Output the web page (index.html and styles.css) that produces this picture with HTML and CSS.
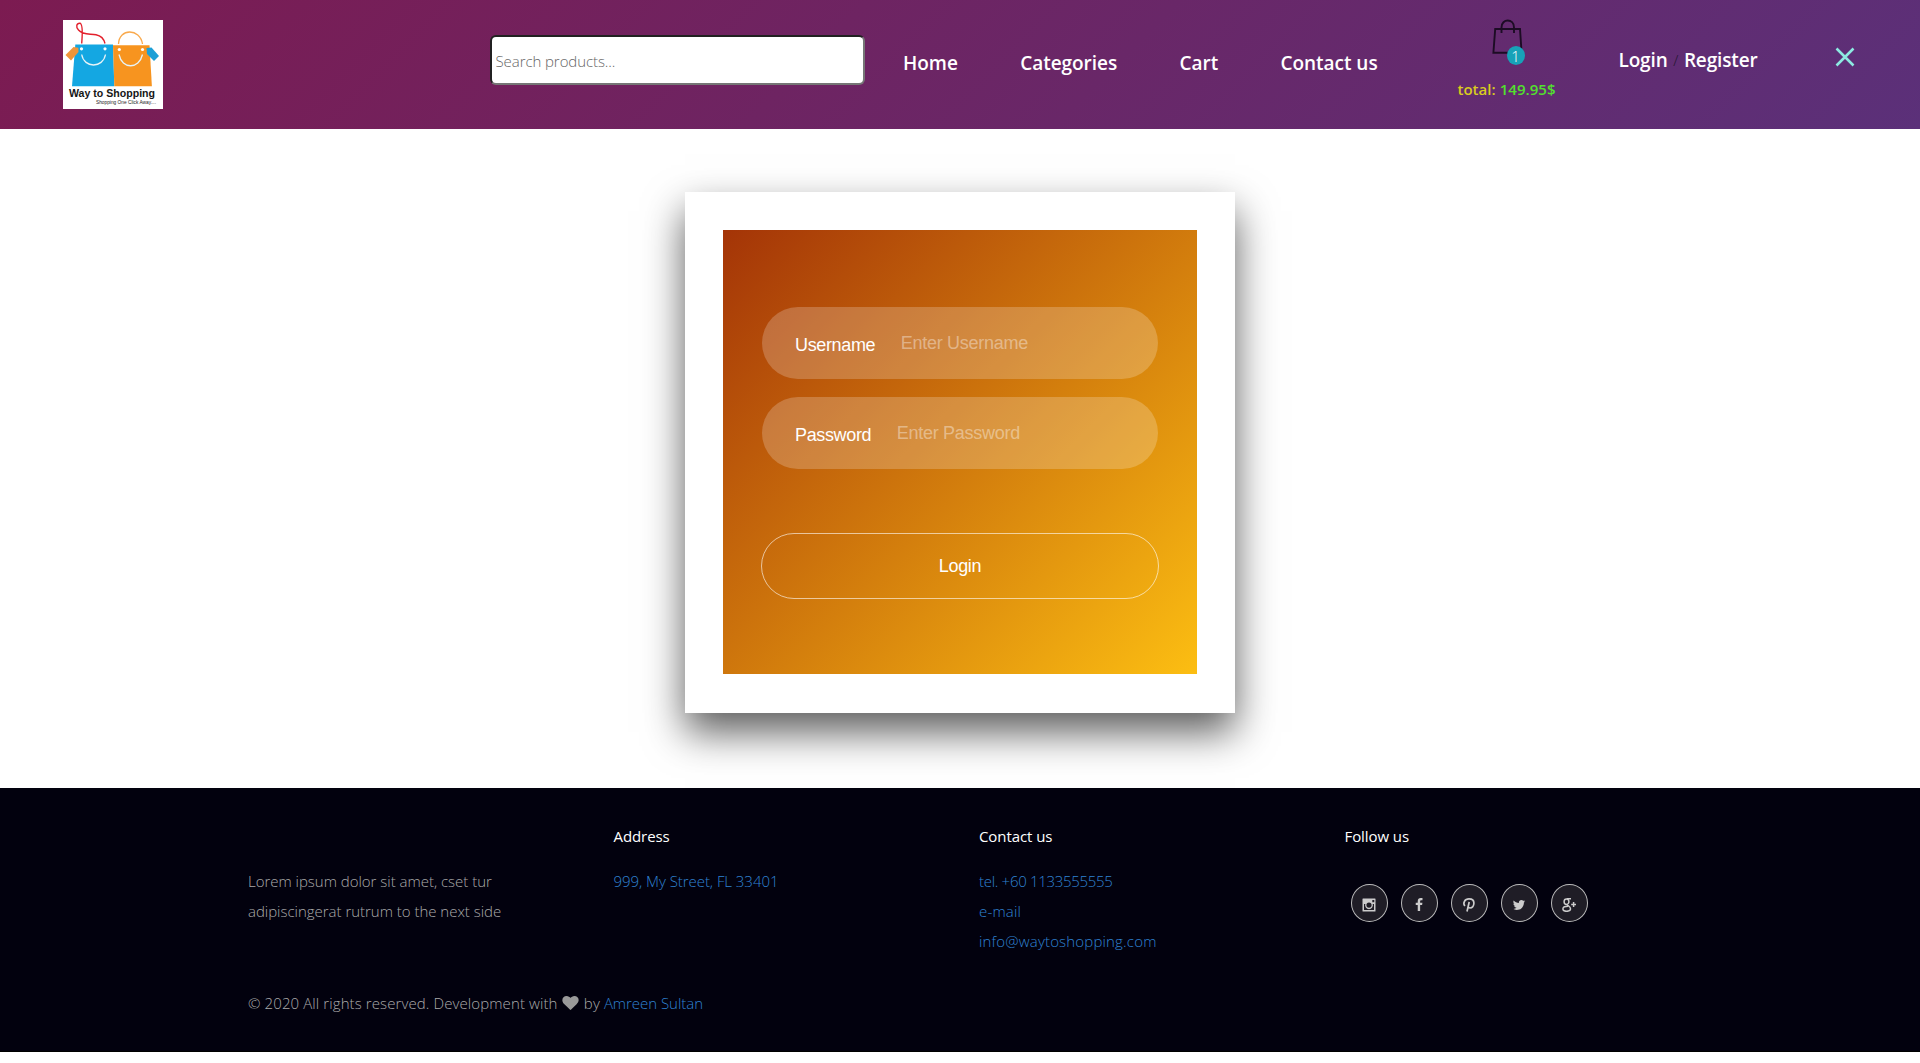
FILE: index.html
```html
<!DOCTYPE html>
<html lang="en">
<head>
<meta charset="utf-8">
<title>Way to Shopping - Login</title>
<link rel="stylesheet" href="styles.css">
</head>
<body>
<header class="site-header">
  <a class="logo" href="#">
    <svg viewBox="0 0 100 89" width="100" height="89">
      <rect width="100" height="89" fill="#fff"/>
      <path d="M12.3 24.5H50l1.3 41.8H9z" fill="#14a7e2"/>
      <path d="M50 25.2h36.5l2.4 41.1H51.3z" fill="#f7941f"/>
      <path d="M18.7 23.5C19.2 16 20.5 4.500 17 3.200C13.500 3 12.500 7 15.500 10C20 15.500 27 13.500 33 14.700C38.500 15.800 41 19 42 23.500" fill="none" stroke="#e3202c" stroke-width="1.400"/>
      <path d="M55.500 24C56 8 77 8 79.500 24" fill="none" stroke="#f9a94c" stroke-width="1.300"/>
      <path d="M18.700 34.500C21 48.500 40 48.500 42.500 34.500M56 34.500C59 49.500 76 49.500 79.500 34.500" fill="none" stroke="#e6f3f7" stroke-width="1.300"/>
      <circle cx="18.500" cy="28.800" r="1.600" fill="#fff"/><circle cx="42" cy="28.800" r="1.600" fill="#fff"/>
      <circle cx="56.300" cy="29.500" r="1.600" fill="#fff"/><circle cx="79.500" cy="29.500" r="1.600" fill="#fff"/>
      <path d="M10.500 27l4.800.800.200 4.200-7.500 8.500L2.500 35z" fill="#f0953a"/>
      <path d="M83.500 28l5-.500 7.500 8.500-5 5-7-7z" fill="#1c9fd6"/>
      <text x="6" y="77" class="logo-name" textLength="86" lengthAdjust="spacingAndGlyphs">Way to Shopping</text>
      <text x="33" y="84.300" class="logo-tag" textLength="60" lengthAdjust="spacingAndGlyphs">Shopping One Click Away....</text>
    </svg>
  </a>
  <input class="search" type="text" placeholder="Search products...">
  <nav class="main-nav">
    <a href="#">Home</a><a href="#">Categories</a><a href="#">Cart</a><a href="#">Contact us</a>
  </nav>
  <div class="cart">
    <div class="cart-icon">
      <svg viewBox="0 0 34 38" width="34" height="38" fill="none" stroke="#1c0c24" stroke-width="1.900">
        <path d="M3.200 10h24.800l1.600 23.800H1.400z"/>
        <path d="M9.500 14V8.500C9.500-.8 22 -.8 22 8.500V14"/>
      </svg>
      <span class="badge">1</span>
    </div>
    <div class="total">total: <span class="amount">149.95$</span></div>
  </div>
  <div class="account"><a href="#">Login</a><span class="slash">/</span><a href="#">Register</a></div>
  <button class="close" aria-label="Close">
    <svg viewBox="0 0 20 20" width="20" height="20" stroke="#8deae2" stroke-width="2.500"><path d="M1.500 1.500l17 17M18.500 1.500l-17 17"/></svg>
  </button>
</header>

<main class="content">
  <div class="card">
    <form class="login">
      <label class="field"><span>Username</span><input type="text" placeholder="Enter Username"></label>
      <label class="field"><span>Password</span><input type="password" placeholder="Enter Password"></label>
      <button class="submit" type="button">Login</button>
    </form>
  </div>
</main>

<footer class="site-footer">
  <div class="columns">
    <div class="column about"><p>Lorem ipsum dolor sit amet, cset tur<br>adipiscingerat rutrum to the next side</p></div>
    <div class="column"><h4>Address</h4><a href="#">999, My Street, FL 33401</a></div>
    <div class="column">
      <h4>Contact us</h4>
      <a class="phone" href="#">tel. +60 1133555555</a>
      <a class="mail" href="#">e-mail</a>
      <a class="mail" href="#">info@waytoshopping.com</a>
    </div>
    <div class="column">
      <h4>Follow us</h4>
      <div class="social">
        <a href="#" aria-label="Instagram"><svg viewBox="0 0 14 14"><path fill-rule="evenodd" d="M1 .5h12q.5 0 .5.500v12q0 .5-.5.500H1q-.5 0-.5-.5V1Q.5.500 1 .500zM10.300 2v2.200h2V2zM2 6v6h10V6h-1.300a3.900 3.900 0 1 1-7.400 0zM7 4.500a2.600 2.600 0 1 0 0 5.200 2.600 2.600 0 0 0 0-5.200z"/></svg></a>
        <a href="#" aria-label="Facebook"><svg viewBox="0 0 1792 1792"><path d="M1343 12v264h-157q-86 0-116 36t-30 108v189h293l-39 296h-254v759h-306v-759h-255v-296h255v-218q0-186 104-288.500t277-102.500q147 0 228 12z"/></svg></a>
        <a href="#" aria-label="Pinterest"><svg viewBox="0 0 14 14"><path d="M2.900 8C.5 5 2.700.9 7 .9c3.200 0 4.900 1.900 4.900 4.200 0 2.800-1.700 4.900-3.900 4.900-1.100 0-1.900-.6-2.200-1.300M7.200 4L5 13.500" fill="none" stroke="#ccc" stroke-width="1.700"/></svg></a>
        <a href="#" aria-label="Twitter"><svg viewBox="0 0 1792 1792"><path d="M1684 408q-67 98-162 167 1 14 1 42 0 130-38 259.500t-115.500 248.500-184.500 210.500-258 146-323 54.500q-271 0-496-145 35 4 78 4 225 0 401-138-105-2-188-64.500t-114-159.500q33 5 61 5 43 0 85-11-112-23-185.500-111.500t-73.500-205.500v-4q68 38 146 41-66-44-105-115t-39-154q0-88 44-163 121 149 294.500 238.500t371.500 99.500q-8-38-8-74 0-134 94.500-228.500t228.500-94.500q140 0 236 102 109-21 205-78-37 115-142 178 93-10 186-50z"/></svg></a>
        <a href="#" aria-label="Google Plus"><svg viewBox="0 0 14 14"><g fill="none" stroke="#ccc" stroke-width="1.500"><ellipse cx="4.500" cy="3.700" rx="2.400" ry="2.700"/><path d="M9 .8H4.800M5.500 6.300C4.500 7.800 8.500 8 8.500 10.800 8.500 14 .9 14.200.9 11 .9 9 3.200 8.300 6 8.300M9.200 6.500H14M11.600 4.100v4.800"/></g></svg></a>
      </div>
    </div>
  </div>
  <p class="copyright">© 2020 All rights reserved. Development with <svg class="heart" viewBox="0 128 1792 1536"><path d="M896 1664q-26 0-44-18l-624-602q-10-8-27.500-26t-55.500-65.500-68-97.500-53.500-121-23.500-138q0-220 127-344t351-124q62 0 126.500 21.500t120 58 95.500 68.500 76 68q36-36 76-68t95.500-68.500 120-58 126.500-21.500q224 0 351 124t127 344q0 221-229 450l-623 600q-18 18-44 18z"/></svg> by <a href="#">Amreen Sultan</a></p>
</footer>
</body>
</html>
```
FILE: styles.css
```css
* { box-sizing: border-box; }

body {
  margin: 0;
  background: #fff;
  color: #aaa;
  font: 300 15px/30px "Open Sans", "Noto Sans", sans-serif;
}

a { color: inherit; text-decoration: none; }
p, h4 { margin: 0; }

/* Header */
.site-header {
  display: flex;
  align-items: flex-start;
  height: 129px;
  padding-left: 63px;
  background: linear-gradient(135deg, #7c1b51, #5b3079);
}

.logo { margin-top: 20px; }
.logo svg { display: block; }
.logo-name { font: bold 11.5px "Liberation Sans", Arial, sans-serif; fill: #161616; }
.logo-tag { font: 5px "Liberation Sans", Arial, sans-serif; fill: #222; }

.search {
  width: 375px;
  height: 50px;
  margin: 35px 0 0 327px;
  padding: 1px 3.5px 0;
  border: 2px inset #767676;
  border-radius: 6px;
  background: #fff;
  font: inherit;
  letter-spacing: -.08px;
}
.search::placeholder { color: #666; opacity: 1; }

.main-nav {
  display: flex;
  gap: 62.3px;
  width: 475px;
  margin: 47.5px 0 0 38px;
  color: #fff;
  font-size: 19px;
  font-weight: 600;
  white-space: nowrap;
}

.main-nav a { letter-spacing: -.03px; }

.cart {
  display: flex;
  flex-direction: column;
  align-items: center;
  width: 100px;
  margin: 19px 0 0 78.5px;
}

.cart-icon { position: relative; height: 55px; width: 30px; }
.cart-icon svg { display: block; }

.badge {
  position: absolute;
  left: 15px;
  top: 27px;
  width: 18px;
  height: 19px;
  border-radius: 50%;
  background: #17a2b8;
  color: #fff;
  font-size: 15px;
  line-height: 20px;
  text-align: center;
}

.total { color: #d9cc1e; font-weight: 600; letter-spacing: .05px; white-space: nowrap; }
.amount { color: #52e02d; }

.account {
  display: flex;
  width: 139px;
  margin: 44.5px 0 0 62px;
  color: #fff;
  font-size: 19px;
  font-weight: 600;
  letter-spacing: -.15px;
}

.slash { width: 16.5px; color: #21152f; font-size: 15px; font-weight: 300; text-align: center; }

.close {
  margin: 46.5px 0 0 77px;
  padding: 0;
  border: 0;
  background: none;
  line-height: 0;
}

/* Login card */
.content { display: flex; justify-content: center; padding: 63px 0 75px; }

.card {
  width: 550px;
  height: 521px;
  padding: 38px;
  background: #fff;
  box-shadow: 0 19px 38px rgba(0, 0, 0, .64);
}

.login {
  display: flex;
  flex-direction: column;
  height: 444px;
  padding: 77px 38px 75px;
  background: linear-gradient(135deg, #a43407, #fcbe12);
  font: 18px/30px "Liberation Sans", Arial, sans-serif;
  letter-spacing: -.35px;
}

.field {
  display: flex;
  align-items: center;
  height: 72px;
  margin: 0 1px 18px;
  padding: 0 33px;
  border-radius: 36px;
  background: rgba(255, 255, 255, .21);
  color: #fff;
}

.field span { margin: 3px 25.5px 0 0; }

.field input {
  flex: 1;
  min-width: 0;
  padding: 0;
  border: 0;
  background: none;
  color: #fff;
  font: inherit;
  letter-spacing: -.28px;
}
.field input::placeholder { color: rgba(255, 255, 255, .4); opacity: 1; }

.submit {
  height: 66px;
  margin-top: auto;
  border: 1px solid rgba(255, 255, 255, .6);
  border-radius: 33px;
  background: none;
  color: #fff;
  font: inherit;
  letter-spacing: inherit;
}

/* Footer */
.site-footer {
  height: 264px;
  padding: 33px 210px 0 248px;
  border-bottom: 1px solid #000;
  background: #02010e;
}

.columns { display: grid; grid-template-columns: repeat(4, 365.5px); height: 135px; }
.column a { display: block; width: max-content; color: #2f82d2; letter-spacing: -.05px; }
.column .phone { letter-spacing: -.3px; }
.column .mail { letter-spacing: .18px; }
.about { padding-top: 45px; }
.about p { letter-spacing: -.02px; }

h4 { margin-bottom: 15px; color: #fff; font-size: 15px; font-weight: 400; letter-spacing: -.08px; }

.social { display: flex; gap: 13px; padding: 18px 0 0 6.5px; }

.column .social a {
  display: flex;
  align-items: center;
  justify-content: center;
  width: 37px;
  height: 38px;
  padding: 4px 1px 0 0;
  border: 1px solid #bbb;
  border-radius: 50%;
  background: #1f1d26;
}

.social svg { width: 14px; height: 14px; fill: #ccc; }

.copyright { margin-top: 32px; letter-spacing: .1px; }
.copyright a { color: #2f82d2; letter-spacing: -.04px; }
.heart { width: 17px; height: 14px; margin: 0 .7px; fill: #999; vertical-align: -1px; }
```
